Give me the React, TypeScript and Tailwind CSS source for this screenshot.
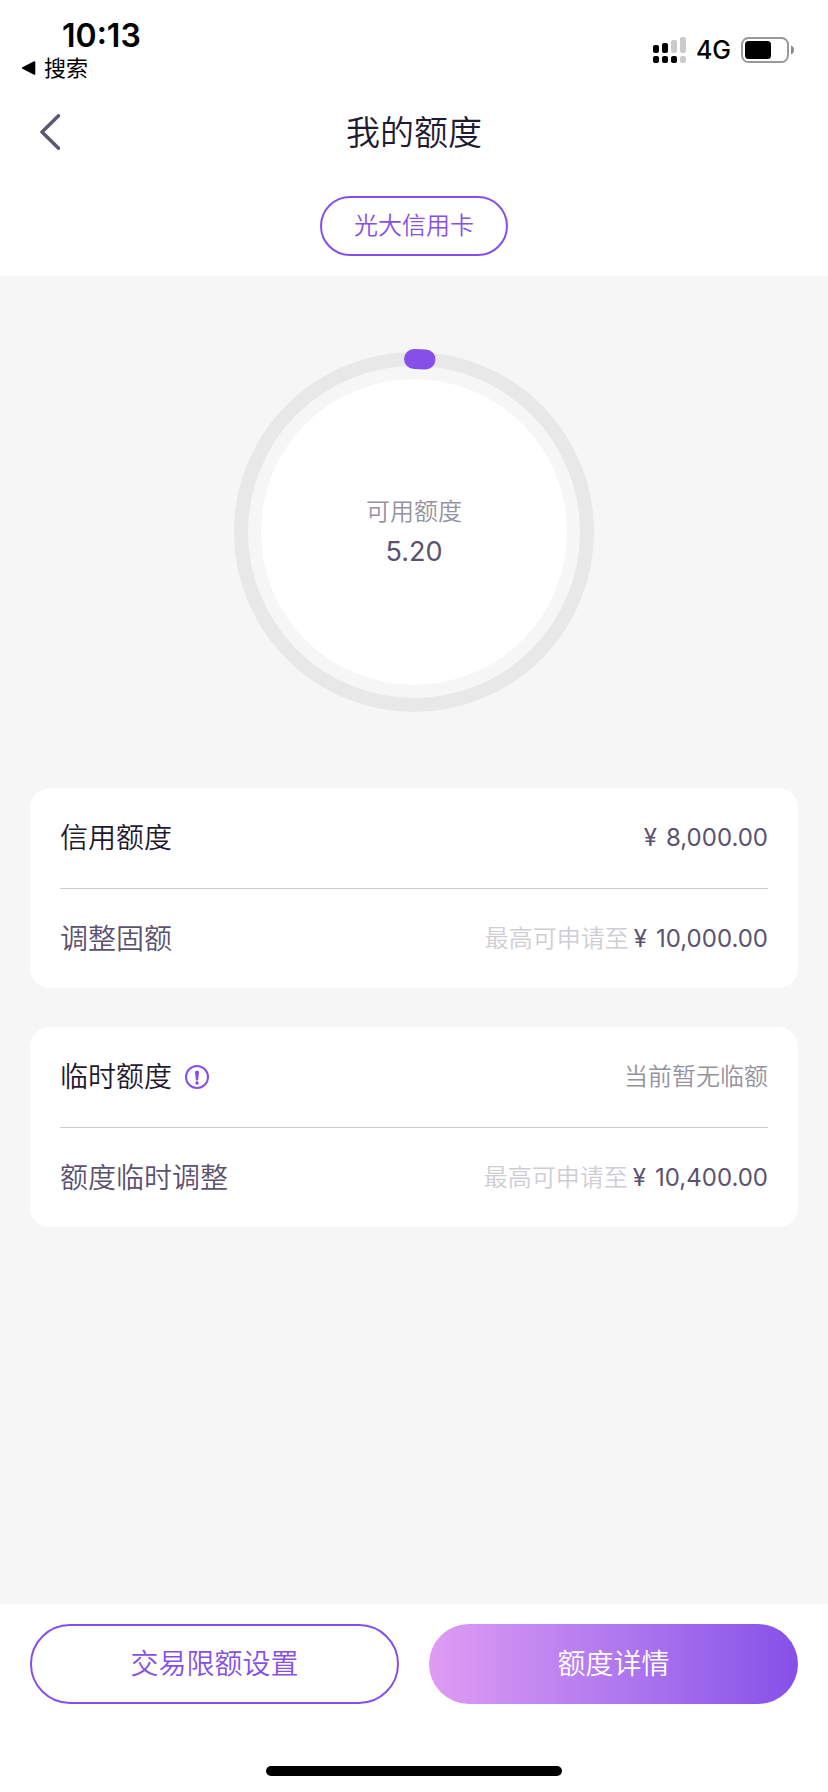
import React from "react";

type LimitRow = {
  label: string;
  hint?: string;
  amount?: string;
  note?: string;
  info?: boolean;
  strong?: boolean;
};

const cards: LimitRow[][] = [
  [
    { label: "信用额度", amount: "8,000.00", strong: true },
    { label: "调整固额", hint: "最高可申请至", amount: "10,000.00" },
  ],
  [
    { label: "临时额度", note: "当前暂无临额", info: true, strong: true },
    { label: "额度临时调整", hint: "最高可申请至", amount: "10,400.00" },
  ],
];

function SignalIcon() {
  return (
    <svg width="33" height="26" viewBox="0 0 33 26" aria-hidden="true">
      <rect x="0" y="8" width="6" height="8" rx="2" />
      <rect x="9" y="6" width="6" height="10" rx="2" />
      <rect x="18" y="3" width="6" height="13" rx="2" fill="#cbcbcb" />
      <rect x="27" y="0" width="6" height="16" rx="2" fill="#cbcbcb" />
      <rect x="0" y="19" width="6" height="7" rx="2" />
      <rect x="9" y="19" width="6" height="7" rx="2" />
      <rect x="18" y="19" width="6" height="7" rx="2" />
      <rect x="27" y="19" width="6" height="7" rx="2" fill="#cbcbcb" />
    </svg>
  );
}

function BatteryIcon() {
  return (
    <svg width="53" height="26" viewBox="0 0 53 26" aria-hidden="true">
      <rect x="1" y="1" width="46" height="24" rx="6.5" fill="none" stroke="#999" strokeWidth="2" />
      <rect x="4" y="4" width="26" height="18" rx="3.5" />
      <path d="M50 8.5c2 .8 3 2.500 3 4.500s-1 3.700-3 4.500z" fill="#8a8a8a" />
    </svg>
  );
}

function StatusBar() {
  return (
    <div className="flex items-start justify-between pr-[34px] pl-5 text-black">
      <div className="flex flex-col pt-[18px] pb-[2px]">
        <span className="pl-[42px] text-[32px] leading-9 font-semibold">10:13</span>
        <a href="#search" className="flex items-center gap-2 text-[22px] leading-7 font-normal">
          <svg width="16" height="16" viewBox="0 0 16 16" aria-hidden="true">
            <path d="M2.500 7.200 14 1.300c.7-.3 1.300 0 1.300.8v11.800c0 .8-.6 1.100-1.300.8L2.500 8.800c-.8-.4-.8-1.200 0-1.600z" />
          </svg>
          搜索
        </a>
      </div>
      <div className="flex items-center gap-[10px] pt-8">
        <SignalIcon />
        <span className="text-[25px] leading-9 font-medium">4G</span>
        <BatteryIcon />
      </div>
    </div>
  );
}

function LimitGauge() {
  return (
    <div className="relative flex size-[360px] items-center justify-center">
      <svg
        className="absolute inset-0 overflow-visible"
        width="360"
        height="360"
        viewBox="0 0 360 360"
        fill="none"
        aria-hidden="true"
      >
        <circle cx="180" cy="180" r="173" stroke="#e8e8e8" strokeWidth="14" />
        <circle cx="180" cy="180" r="153" fill="#fff" />
        {/* used part of the ring */}
        <path d="M180 7A173 173 0 0 1 191.500 7.400" stroke="#8650e8" strokeWidth="20" strokeLinecap="round" />
      </svg>
      <div className="relative flex flex-col items-center">
        <span className="text-[24px] leading-10 text-[#9592a0]">可用额度</span>
        <span className="text-[27px] leading-10 font-normal text-[#5b5270]">5.20</span>
      </div>
    </div>
  );
}

function InfoIcon() {
  return (
    <svg width="24" height="24" viewBox="0 0 24 24" fill="none" aria-hidden="true">
      <circle cx="12" cy="12" r="11" stroke="#8650e8" strokeWidth="2" />
      <path d="M10 7.200c0-1.900 4-1.900 4 0l-.9 8.300h-2.200z" fill="#8650e8" />
      <circle cx="12" cy="18" r="1.800" fill="#8650e8" />
    </svg>
  );
}

function LimitCard({ rows }: { rows: LimitRow[] }) {
  return (
    <section className="rounded-[20px] bg-white px-[30px]">
      {rows.map((row) => (
        <div
          key={row.label}
          className="flex h-[100px] items-center justify-between border-[#cdcdcd] not-first:border-t"
        >
          <div className="flex items-center gap-[13px]">
            <span className={row.strong ? "text-[28px] leading-10 text-[#1f1a30]" : "text-[28px] leading-10 text-[#5b5270]"}>
              {row.label}
            </span>
            {row.info && (
              <button type="button" aria-label="临时额度说明">
                <InfoIcon />
              </button>
            )}
          </div>
          <div className="flex items-center gap-[5px] text-[24px] leading-10">
            {row.hint && <span className="text-[#cfced3]">{row.hint}</span>}
            {row.note && <span className="text-[#9592a0]">{row.note}</span>}
            {row.amount && (
              <span className="flex gap-[9px] font-normal text-[#5b5270]">
                <span>¥</span>
                <span>{row.amount}</span>
              </span>
            )}
          </div>
        </div>
      ))}
    </section>
  );
}

export default function App() {
  return (
    <div className="flex min-h-screen flex-col bg-[#f6f6f6] font-['Inter','Noto_Sans_CJK_SC',sans-serif] font-[350]">
      <header className="bg-white">
        <StatusBar />
        <div className="grid h-[96px] grid-cols-[1fr_auto_1fr] items-center px-10">
          <button type="button" aria-label="返回" className="justify-self-start">
            <svg width="20" height="36" viewBox="0 0 20 36" fill="none" aria-hidden="true">
              <path
                d="M18.500 1.800 2 18l16.500 16.200"
                stroke="#5f5672"
                strokeWidth="3.500"
                strokeLinecap="round"
                strokeLinejoin="round"
              />
            </svg>
          </button>
          <h1 className="pt-[2px] text-[34px] leading-[48px] font-[350] text-[#1f1a30]">我的额度</h1>
        </div>
        <div className="flex justify-center pt-4 pb-5">
          <button
            type="button"
            className="h-[60px] rounded-full border-2 border-[#8650e8] px-[32px] text-[24px] leading-10 text-[#8650e8]"
          >
            光大信用卡
          </button>
        </div>
      </header>

      <main className="flex flex-1 flex-col px-[30px] pt-[76px]">
        <div className="flex justify-center">
          <LimitGauge />
        </div>
        <div className="mt-[76px] flex flex-col gap-[39px]">
          {cards.map((rows) => (
            <LimitCard key={rows[0].label} rows={rows} />
          ))}
        </div>
      </main>

      <footer className="bg-white px-[30px] pt-5 pb-4">
        <div className="grid grid-cols-2 gap-[30px] text-[28px] leading-10">
          <button type="button" className="h-20 rounded-full border-2 border-[#8650e8] text-[#8650e8]">
            交易限额设置
          </button>
          <button type="button" className="h-20 rounded-full bg-linear-to-r from-[#e09cf4] to-[#8650e8] text-white">
            额度详情
          </button>
        </div>
        <div className="mx-auto mt-[62px] h-[10px] w-[296px] rounded-full bg-black" />
      </footer>
    </div>
  );
}
